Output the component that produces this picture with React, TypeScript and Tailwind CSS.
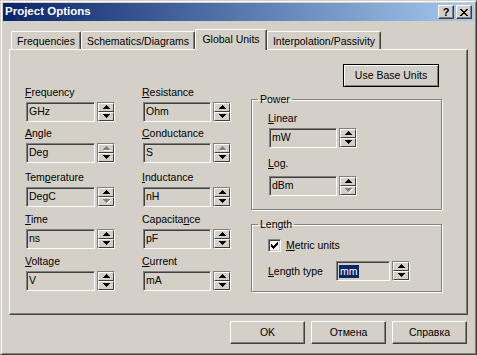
import React from "react";

const U = ({ c }: { c: string }) => (
  <span className="underline underline-offset-[1px] decoration-[1px]">{c}</span>
);

function Arrow({ dir, disabled }: { dir: "up" | "down"; disabled?: boolean }) {
  const d =
    dir === "up"
      ? "M3 0h1v1h1v1h1v1h1v1H0V3h1V2h1V1h1z"
      : "M0 0h7v1h-1v1h-1v1h-1v1h-1v-1h-1v-1h-1v-1h-1z";
  return (
    <svg width="8" height="5" viewBox="0 0 8 5" shapeRendering="crispEdges" className="ml-[1px]">
      {disabled ? (
        <>
          <path d={d} fill="#ffffff" transform="translate(1,1)" />
          <path d={d} fill="#808080" />
        </>
      ) : (
        <path d={d} fill="#000000" />
      )}
    </svg>
  );
}

function Spin({ upDis, downDis }: { upDis?: boolean; downDis?: boolean }) {
  return (
    <div className="w-[18px] h-[20px] shrink-0 border border-t-[#808080] border-l-[#808080] border-r-white border-b-white flex flex-col">
      <div className="h-[9px] flex items-center justify-center border border-t-white border-l-white border-r-[#404040] border-b-[#404040]">
        <Arrow dir="up" disabled={upDis} />
      </div>
      <div className="h-[9px] flex items-center justify-center border border-t-white border-l-white border-r-[#404040] border-b-[#404040]">
        <Arrow dir="down" disabled={downDis} />
      </div>
    </div>
  );
}

function Box({ children, className }: { children: React.ReactNode; className: string }) {
  return (
    <div
      className={
        "h-[20px] shrink-0 border border-t-[#808080] border-l-[#808080] border-r-white border-b-white shadow-[inset_1px_1px_0_#404040,inset_-1px_-1px_0_#d4d0c8] flex items-center pl-[2px] " +
        className
      }
    >
      {children}
    </div>
  );
}

function Field({
  label,
  value,
  boxW,
  upDis,
  downDis,
  className,
  boxMt,
}: {
  label: React.ReactNode;
  value: string;
  boxW: string;
  upDis?: boolean;
  downDis?: boolean;
  className?: string;
  boxMt?: string;
}) {
  return (
    <div className={className}>
      <div className="h-[13px] leading-[13px] whitespace-nowrap">{label}</div>
      <div className={"flex gap-[2px] " + (boxMt ?? "mt-[3px]")}>
        <Box className={"ml-[1px] " + boxW}>{value}</Box>
        <Spin upDis={upDis} downDis={downDis} />
      </div>
    </div>
  );
}

function Btn({ children, className }: { children: React.ReactNode; className?: string }) {
  return (
    <div
      className={
        "h-[23px] flex items-center justify-center border border-t-white border-l-white border-r-[#404040] border-b-[#404040] shadow-[inset_-1px_-1px_0_#808080] " +
        (className ?? "")
      }
    >
      {children}
    </div>
  );
}

function CheckMark() {
  const rows: [number, number, number][] = [
    [0, 6, 1],
    [1, 5, 2],
    [2, 0, 1],
    [2, 4, 3],
    [3, 0, 2],
    [3, 3, 3],
    [4, 0, 5],
    [5, 1, 3],
    [6, 2, 1],
  ];
  return (
    <svg width="7" height="7" viewBox="0 0 7 7" shapeRendering="crispEdges">
      {rows.map(([y, x, w], i) => (
        <rect key={i} x={x} y={y} width={w} height={1} fill="#000" />
      ))}
    </svg>
  );
}

function CloseX() {
  const rows: [number, number, number][] = [
    [0, 0, 2],
    [0, 6, 2],
    [1, 1, 2],
    [1, 5, 2],
    [2, 2, 4],
    [3, 3, 2],
    [4, 2, 4],
    [5, 1, 2],
    [5, 5, 2],
    [6, 0, 2],
    [6, 6, 2],
  ];
  return (
    <svg width="8" height="7" viewBox="0 0 8 7" shapeRendering="crispEdges">
      {rows.map(([y, x, w], i) => (
        <rect key={i} x={x} y={y} width={w} height={1} fill="#000" />
      ))}
    </svg>
  );
}

export default function App() {
  return (
    <div className="w-[477px] h-[355px] bg-[#d4d0c8] border border-t-[#d4d0c8] border-l-[#d4d0c8] border-r-[#404040] border-b-[#404040] shadow-[inset_1px_1px_0_#ffffff,inset_-1px_-1px_0_#808080] p-[2px] flex flex-col font-['Liberation_Sans',Arial,sans-serif] text-[10.5px] text-black select-none">
      {/* Title bar */}
      <div className="h-[18px] shrink-0 flex items-center justify-between pl-[2px] pr-[2px] bg-[linear-gradient(to_right,#0a246a,#a6caf0)]">
        <span className="text-white font-bold text-[11.5px] leading-none">Project Options</span>
        <div className="flex gap-[2px]">
          <div className="w-[16px] h-[14px] flex items-center justify-center border border-t-white border-l-white border-r-[#404040] border-b-[#404040] shadow-[inset_-1px_-1px_0_#808080] bg-[#d4d0c8]">
            <span className="font-bold text-[11px] leading-none">?</span>
          </div>
          <div className="w-[16px] h-[14px] flex items-center justify-center border border-t-white border-l-white border-r-[#404040] border-b-[#404040] shadow-[inset_-1px_-1px_0_#808080] bg-[#d4d0c8]">
            <CloseX />
          </div>
        </div>
      </div>

      {/* Tabs */}
      <div className="mx-[6px] mt-[8px] h-[20px] shrink-0 flex items-end">
        <div className="ml-[2px] w-[70px] h-[18px] pt-[2px] flex items-center justify-center border-t border-l border-r border-t-white border-l-white border-r-[#404040] shadow-[inset_-1px_0_0_#808080] rounded-t-[2px]">
          Frequencies
        </div>
        <div className="w-[114px] h-[18px] pt-[2px] flex items-center justify-center border-t border-l border-r border-t-white border-l-white border-r-[#404040] shadow-[inset_-1px_0_0_#808080] rounded-t-[2px]">
          Schematics/Diagrams
        </div>
        <div className="relative z-10 -mb-[1px] w-[72px] h-[21px] flex items-center justify-center bg-[#d4d0c8] border-t border-l border-r border-t-white border-l-white border-r-[#404040] shadow-[inset_-1px_0_0_#808080] rounded-t-[2px]">
          Global Units
        </div>
        <div className="w-[114px] h-[18px] pt-[2px] flex items-center justify-center border-t border-l border-r border-t-white border-l-white border-r-[#404040] shadow-[inset_-1px_0_0_#808080] rounded-t-[2px]">
          Interpolation/Passivity
        </div>
      </div>

      {/* Panel */}
      <div className="mx-[6px] h-[266px] shrink-0 border border-t-white border-l-white border-r-[#404040] border-b-[#404040] shadow-[inset_-1px_-1px_0_#808080] flex">
        {/* Column 1 */}
        <div className="ml-[15px] mt-[36px] w-[117px] flex flex-col">
          <Field label={<><U c="F" />requency</>} value="GHz" boxW="w-[69px]" />
          <Field className="mt-[5px]" label={<><U c="A" />ngle</>} value="Deg" boxW="w-[69px]" upDis />
          <Field className="mt-[8px]" label={<>Tem<U c="p" />erature</>} value="DegC" boxW="w-[69px]" downDis />
          <Field className="mt-[6px]" label={<><U c="T" />ime</>} value="ns" boxW="w-[69px]" />
          <Field className="mt-[6px]" label={<><U c="V" />oltage</>} value="V" boxW="w-[69px]" />
        </div>
        {/* Column 2 */}
        <div className="mt-[36px] w-[109px] flex flex-col">
          <Field label={<><U c="R" />esistance</>} value="Ohm" boxW="w-[68px]" />
          <Field className="mt-[5px]" label={<><U c="C" />onductance</>} value="S" boxW="w-[68px]" upDis />
          <Field className="mt-[8px]" label={<><U c="I" />nductance</>} value="nH" boxW="w-[68px]" />
          <Field className="mt-[6px]" label={<>Capacita<U c="n" />ce</>} value="pF" boxW="w-[68px]" />
          <Field className="mt-[6px]" label={<><U c="C" />urrent</>} value="mA" boxW="w-[68px]" />
        </div>
        {/* Right column */}
        <div className="mt-[14px] w-[191px] flex flex-col">
          <div className="flex justify-end pr-[3px]">
            <div className="w-[96px] h-[23px] flex items-center justify-center border border-black shadow-[inset_1px_1px_0_#ffffff,inset_-1px_-1px_0_#808080]">
              Use Base Units
            </div>
          </div>
          <fieldset className="mt-[6px] h-[117px] border border-[#808080] shadow-[inset_1px_1px_0_#ffffff,1px_1px_0_#ffffff] px-[6px]">
            <legend className="px-[2px] leading-[13px]">Power</legend>
            <div className="pl-[10px] flex flex-col">
              <Field className="mt-[6px]" label={<><U c="L" />inear</>} value="mW" boxW="w-[68px]" />
              <Field className="mt-[9px]" boxMt="mt-[6px]" label={<><U c="L" />og.</>} value="dBm" boxW="w-[68px]" downDis />
            </div>
          </fieldset>
          <fieldset className="mt-[8px] h-[74px] border border-[#808080] shadow-[inset_1px_1px_0_#ffffff,1px_1px_0_#ffffff] px-[6px]">
            <legend className="px-[2px] leading-[13px]">Length</legend>
            <div className="pl-[10px] flex flex-col">
              <div className="mt-[8px] flex items-center">
                <div className="w-[13px] h-[13px] bg-white border border-t-[#808080] border-l-[#808080] border-r-white border-b-white shadow-[inset_1px_1px_0_#404040,inset_-1px_-1px_0_#d4d0c8] flex items-center justify-center">
                  <CheckMark />
                </div>
                <span className="ml-[5px] leading-[13px]">
                  <U c="M" />etric units
                </span>
              </div>
              <div className="mt-[9px] flex items-center">
                <span className="w-[68px] leading-[13px]">
                  <U c="L" />ength type
                </span>
                <div className="flex gap-[2px]">
                  <Box className="w-[54px]">
                    <span className="bg-[#0a246a] text-white leading-[13px] px-[1px]">mm</span>
                  </Box>
                  <Spin />
                </div>
              </div>
            </div>
          </fieldset>
        </div>
      </div>

      {/* Bottom buttons */}
      <div className="mt-[6px] mr-[7px] flex justify-end gap-[6px]">
        <Btn className="w-[75px]">OK</Btn>
        <Btn className="w-[75px]">Отмена</Btn>
        <Btn className="w-[75px]">Справка</Btn>
      </div>
    </div>
  );
}
